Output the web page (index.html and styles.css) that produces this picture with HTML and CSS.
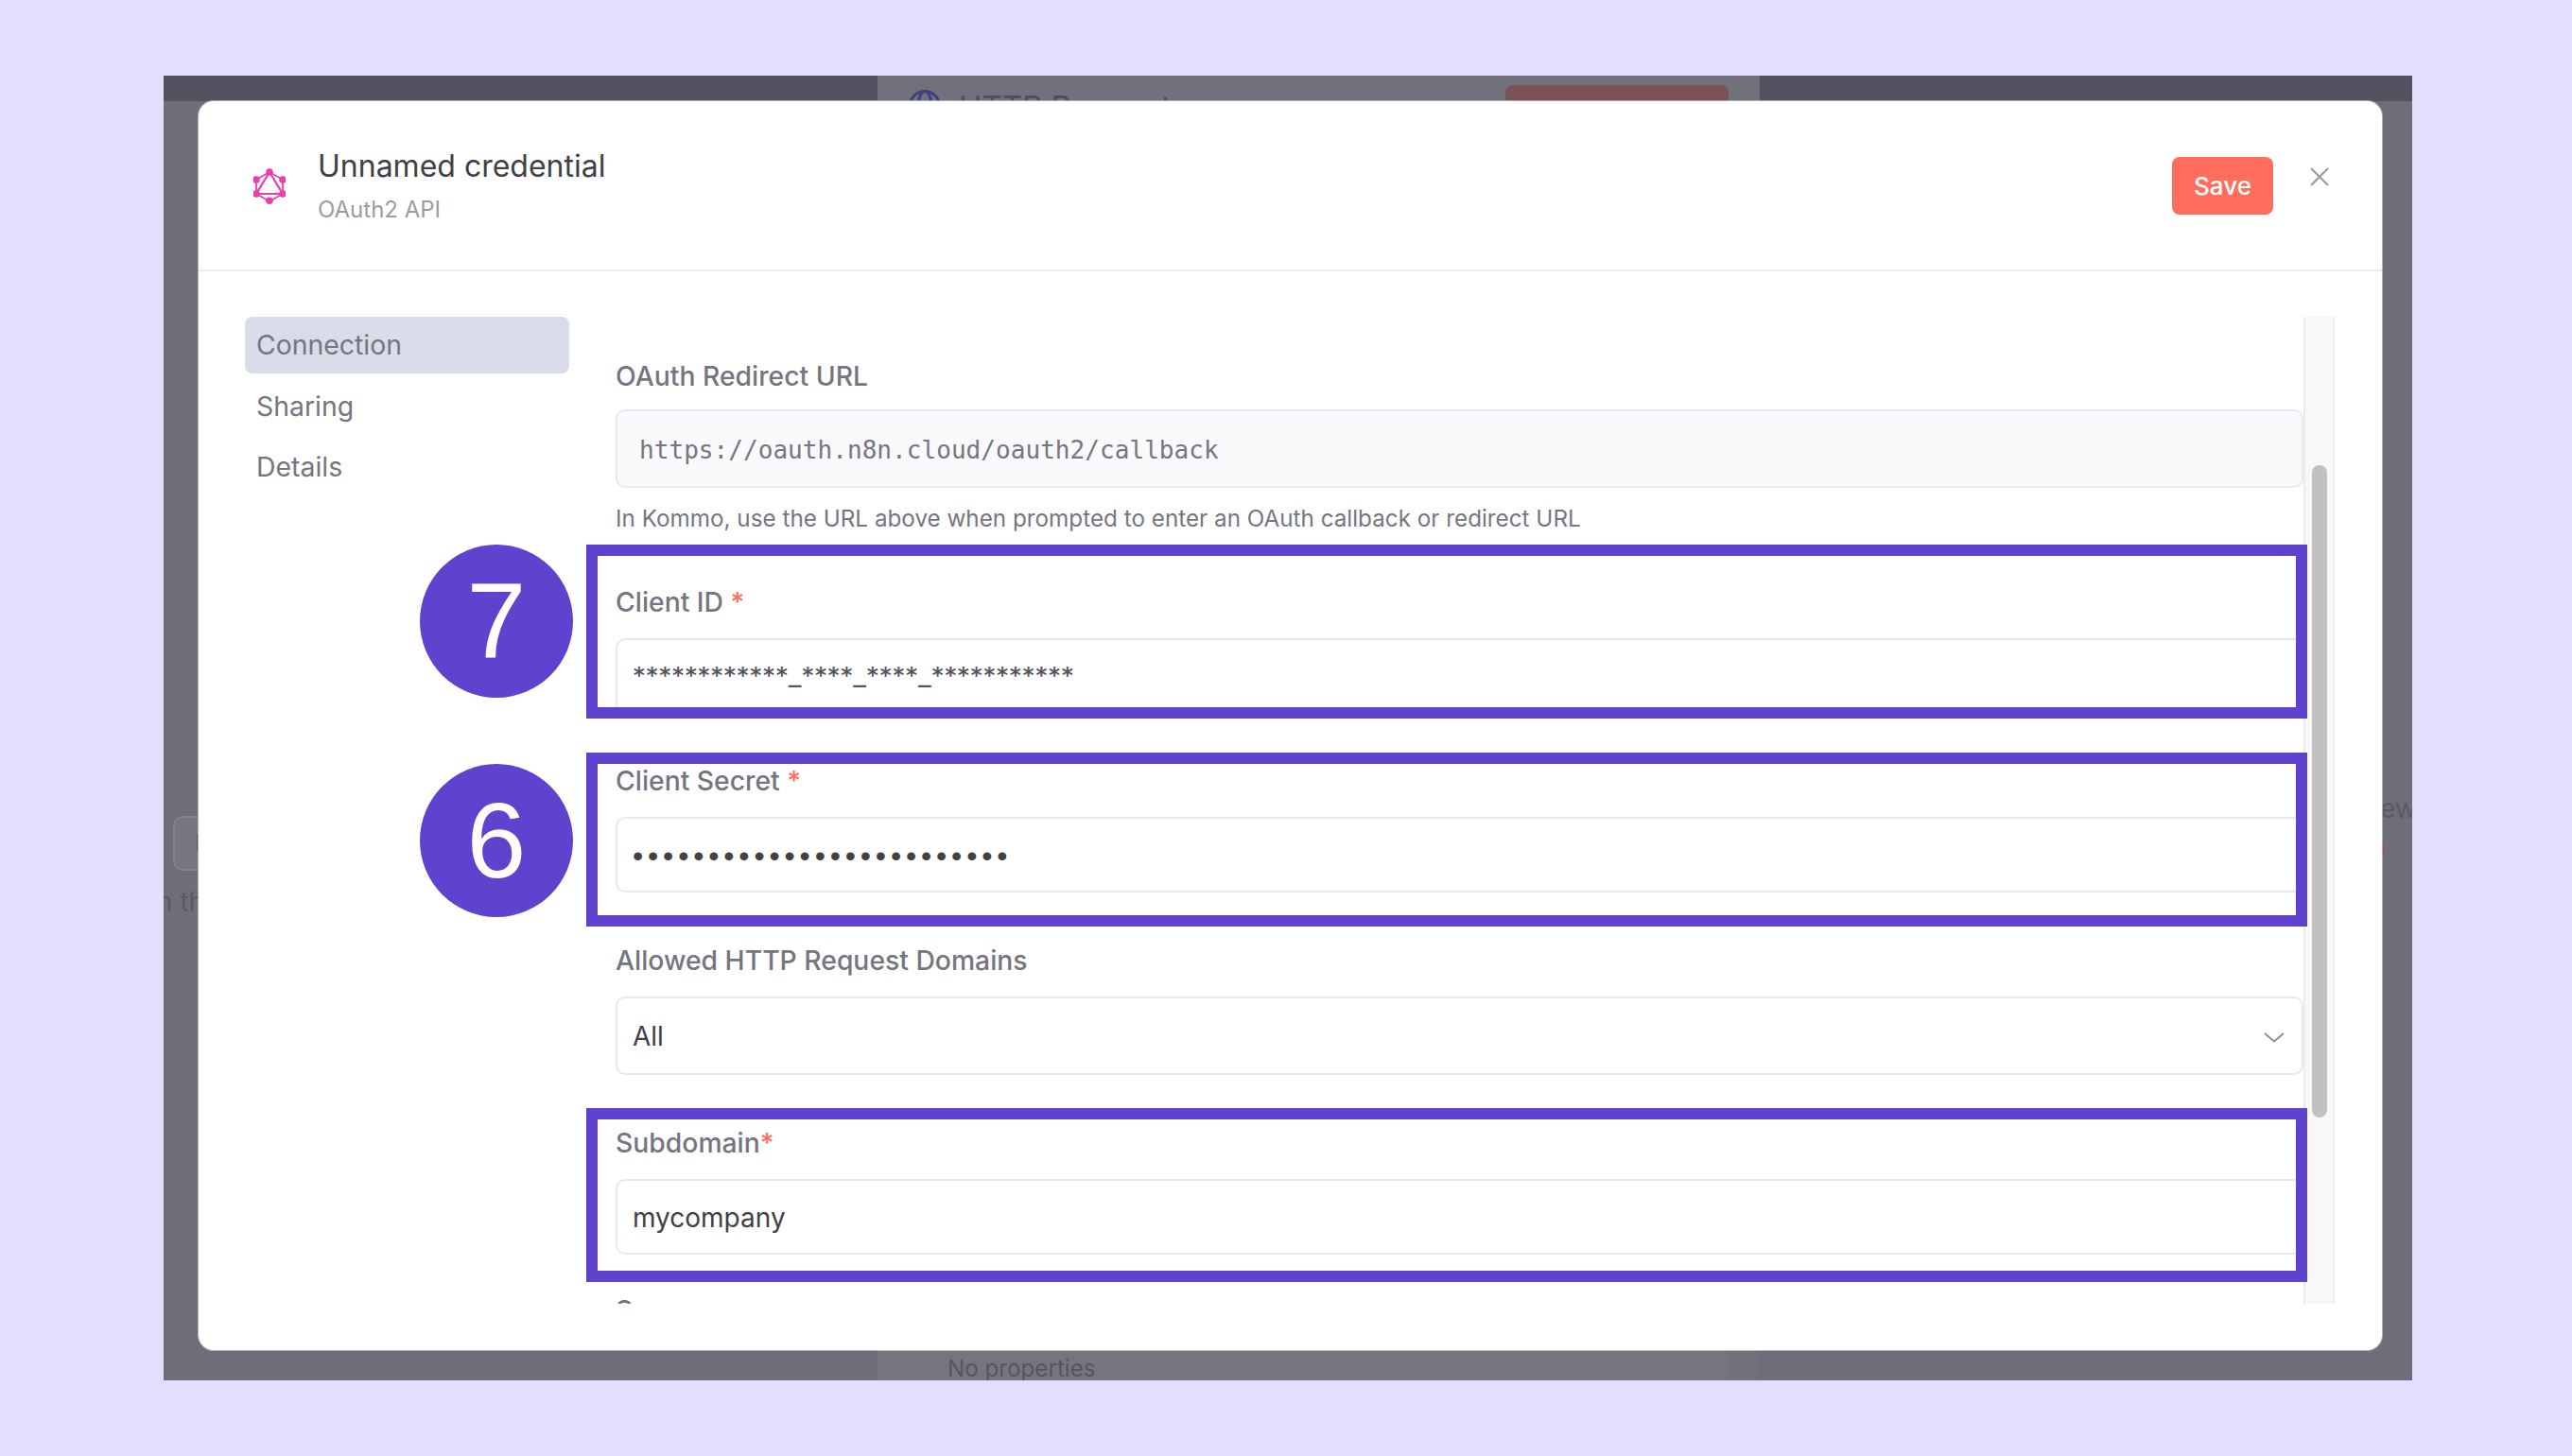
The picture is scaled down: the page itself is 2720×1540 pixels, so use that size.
FILE: index.html
```html
<!DOCTYPE html>
<html lang="en">
<head>
<meta charset="utf-8">
<title>Unnamed credential</title>
<link rel="stylesheet" href="styles.css">
</head>
<body>
<div class="frame">
  <div class="topbar"></div>
  <div class="ndv-panel">
    <svg class="ndv-globe" viewBox="0 0 34 34" fill="none" stroke="#3f3f82" stroke-width="3">
      <circle cx="17" cy="17" r="15.5"/>
      <ellipse cx="17" cy="17" rx="7" ry="15.5"/>
      <path d="M2 17h30"/>
    </svg>
    <span class="ndv-title">HTTP Request</span>
    <span class="ndv-button"></span>
  </div>
  <div class="ndv-bottom"><span class="ndv-empty">No properties</span></div>
  <div class="ghost-input"><span class="ghost-caret"></span></div>
  <span class="ghost-text ghost-left">n the</span>
  <span class="ghost-text ghost-right">ew</span>
  <span class="ghost-red">a</span>

  <div class="modal">
    <header class="modal-header">
      <svg class="cred-icon" viewBox="0 0 34 38" fill="none" stroke="#ee3cb1">
        <path stroke-width="1.8" d="M17 4 31 12V27L17 35 3 27V12Z"/>
        <path stroke-width="2.2" d="M17 4 3 27H31Z"/>
        <g fill="#ee3cb1" stroke="none">
          <circle cx="17" cy="4" r="3.8"/><circle cx="31" cy="12" r="3.8"/><circle cx="31" cy="27" r="3.8"/>
          <circle cx="17" cy="34.2" r="3.8"/><circle cx="3" cy="27" r="3.8"/><circle cx="3" cy="12" r="3.8"/>
        </g>
      </svg>
      <div class="cred-titles">
        <h1 class="cred-name">Unnamed credential</h1>
        <p class="cred-type">OAuth2 API</p>
      </div>
      <button class="save-btn">Save</button>
      <svg class="close-icon" viewBox="0 0 20 20" fill="none" stroke="#97979e" stroke-width="2"><path d="M1 1 19 19M19 1 1 19"/></svg>
    </header>
    <div class="modal-body">
      <nav class="side-nav">
        <a class="nav-item nav-active">Connection</a>
        <a class="nav-item">Sharing</a>
        <a class="nav-item">Details</a>
      </nav>
      <div class="form">
        <div class="field field-redirect">
          <label class="label">OAuth Redirect URL</label>
          <div class="input input-readonly input-tall">https://oauth.n8n.cloud/oauth2/callback</div>
          <p class="help">In Kommo, use the URL above when prompted to enter an OAuth callback or redirect URL</p>
        </div>
        <div class="field field-id">
          <label class="label">Client ID <span class="req">*</span></label>
          <div class="input input-masked">************_****_****_***********</div>
        </div>
        <div class="field field-next">
          <label class="label">Client Secret <span class="req">*</span></label>
          <div class="input input-dots">•••••••••••••••••••••••••</div>
        </div>
        <div class="field field-next">
          <label class="label">Allowed HTTP Request Domains</label>
          <div class="input input-tall input-select">All
            <svg class="chevron" viewBox="0 0 22 11" fill="none" stroke="#8d8d96" stroke-width="2"><path d="M1 1 11 9.5 21 1"/></svg>
          </div>
        </div>
        <div class="field field-next">
          <label class="label">Subdomain<span class="req">*</span></label>
          <div class="input input-text">mycompany</div>
        </div>
        <div class="field field-last">
          <label class="label">Scope</label>
        </div>
      </div>
      <div class="scrollbar"><div class="scroll-thumb"></div></div>
    </div>
    <div class="highlight hl-id"></div>
    <div class="highlight hl-secret"></div>
    <div class="highlight hl-sub"></div>
    <div class="step step-7">7</div>
    <div class="step step-6">6</div>
  </div>
</div>
</body>
</html>
```
FILE: styles.css
```css
* { box-sizing: border-box; }
html, body { margin: 0; padding: 0; }
body {
  width: 2720px;
  height: 1540px;
  background: #e3defd;
  font-family: Inter, "Noto Sans", sans-serif;
  overflow: hidden;
  padding: 80px 169px 80px 173px;
}
.frame {
  position: relative;
  width: 2378px;
  height: 1380px;
  background: #6e6e7a;
  overflow: hidden;
}
.topbar {
  height: 27px;
  background: #53535f;
}
.ndv-panel {
  position: absolute;
  left: 755px;
  top: 0;
  width: 933px;
  height: 60px;
  background: #71717c;
}
.ndv-bottom {
  position: absolute;
  left: 755px;
  top: 1340px;
  width: 930px;
  height: 40px;
  background: #757580;
  border-right: 31px solid #71717c;
}
.ndv-globe {
  position: absolute;
  left: 33px;
  top: 15px;
  width: 34px;
  height: 34px;
}
.ndv-title {
  position: absolute;
  left: 86px;
  top: 11px;
  font-size: 33px;
  line-height: 44px;
  color: #4e4e5a;
}
.ndv-button {
  position: absolute;
  left: 664px;
  top: 10px;
  width: 236px;
  height: 40px;
  border-radius: 8px;
  background: #7b5057;
}
.ndv-empty {
  position: absolute;
  left: 74px;
  top: 10px;
  font-size: 24.2px;
  line-height: 36px;
  color: #55555f;
}
.ghost-input {
  position: absolute;
  left: 10px;
  top: 783px;
  width: 80px;
  height: 58px;
  border: 2px solid #83838d;
  border-radius: 10px;
  background: #767581;
}
.ghost-caret {
  display: block;
  position: absolute;
  left: 23px;
  top: 17px;
  width: 4px;
  height: 18px;
  background: #5a5a66;
}
.ghost-text {
  position: absolute;
  font-size: 28px;
  line-height: 34px;
  color: #595965;
}
.ghost-left { left: -7px; top: 857px; }
.ghost-right { left: 2344px; top: 758px; }
.ghost-red {
  position: absolute;
  left: 2336px;
  top: 800px;
  font-size: 26px;
  line-height: 30px;
  color: #9b4e55;
}

.modal {
  position: absolute;
  left: 37px;
  top: 27px;
  width: 2309px;
  height: 1321px;
  background: #fff;
  border-radius: 16px;
  box-shadow: 0 0 0 1px rgba(222, 222, 232, 0.6);
}
.modal-header {
  display: flex;
  align-items: flex-start;
  height: 180px;
  padding: 59px 56px 0 58px;
  border-bottom: 2px solid #ebebf1;
}
.cred-icon {
  width: 34px;
  height: 38px;
  margin-top: 12px;
  flex: none;
}
.cred-titles {
  flex: 1;
  margin-left: 35px;
}
.cred-name {
  margin: -10px 0 0 -1px;
  font-size: 32px;
  font-weight: 400;
  line-height: 40px;
  color: #3f3f45;
}
.cred-type {
  margin: 8px 0 0 -1px;
  font-size: 24px;
  line-height: 36px;
  color: #9a9ba3;
}
.save-btn {
  width: 107px;
  height: 61px;
  border: 0;
  border-radius: 8px;
  background: #ff6e5c;
  color: #fff;
  font: 500 26px/1 Inter, sans-serif;
  padding: 0;
}
.close-icon {
  width: 20px;
  height: 20px;
  margin: 11px 0 0 39px;
  flex: none;
}
.modal-body {
  display: flex;
  height: 1044px;
  margin-top: 48px;
  padding-left: 49px;
}
.side-nav {
  display: flex;
  flex-direction: column;
  gap: 4.5px;
  width: 343px;
  flex: none;
  margin-right: 49px;
}
.nav-item {
  height: 60px;
  padding-left: 12px;
  border-radius: 8px;
  font-size: 28.4px;
  line-height: 60px;
  color: #74757f;
}
.nav-active { background: #d9dde9; }
.form {
  width: 1785px;
  flex: none;
  height: 1044px;
  overflow: hidden;
  padding-top: 45px;
}
.label {
  display: block;
  height: 36px;
  margin-bottom: 20px;
  font-size: 28.3px;
  line-height: 36px;
  font-weight: 500;
  color: #74757f;
}
.field-redirect .label { margin-bottom: 17px; }
.req { color: #ff6e5c; }
.input {
  display: flex;
  align-items: center;
  position: relative;
  height: 80px;
  padding-left: 16px;
  border: 2px solid #e7e8f0;
  border-radius: 10px;
  background: #fff;
  font-size: 28px;
  color: #404046;
}
.input-tall { height: 83px; }
.input-text { padding-top: 2px; }
.input-readonly {
  padding: 3px 0 0 23px;
  background: #fafafd;
  font-family: "DejaVu Sans Mono", monospace;
  font-size: 26.1px;
  color: #75767f;
}
.input-masked {
  align-items: flex-start;
  height: 79px;
  padding-top: 24px;
  font-family: "DejaVu Sans Mono", monospace;
  font-size: 22.8px;
  font-weight: 700;
  color: #55555f;
}
.input-dots {
  padding-top: 2px;
  font-family: "Liberation Sans", sans-serif;
  font-size: 32px;
  letter-spacing: 4.85px;
  color: #404046;
}
.input-select { margin-top: 1px; }
.chevron {
  position: absolute;
  right: 18px;
  top: 36px;
  width: 22px;
  height: 11px;
}
.help {
  margin: 16px 0 0;
  font-size: 24.25px;
  line-height: 34px;
  color: #75767f;
}
.field-id { margin-top: 53px; }
.field-next { margin-top: 54px; }
.field-last { margin-top: 41px; }
.scrollbar {
  width: 33px;
  flex: none;
  height: 1044px;
  background: #f8f8f8;
  border-left: 2px solid #ececec;
  border-right: 2px solid #ececec;
  padding: 157px 6px 0 7px;
}
.scroll-thumb {
  height: 690px;
  border-radius: 9px;
  background: #c1c1c1;
}
.highlight {
  position: absolute;
  left: 410px;
  width: 1820px;
  height: 184px;
  border: 12px solid #5f43cf;
}
.hl-id { top: 469px; }
.hl-secret { top: 689px; }
.hl-sub { top: 1065px; }
.step {
  position: absolute;
  left: 234px;
  width: 162px;
  height: 162px;
  border-radius: 50%;
  background: #5f43cf;
  color: #fff;
  font-family: "Liberation Sans", sans-serif;
  font-size: 113px;
  line-height: 162px;
  text-align: center;
}
.step-7 { top: 469px; }
.step-6 { top: 701px; }
```
